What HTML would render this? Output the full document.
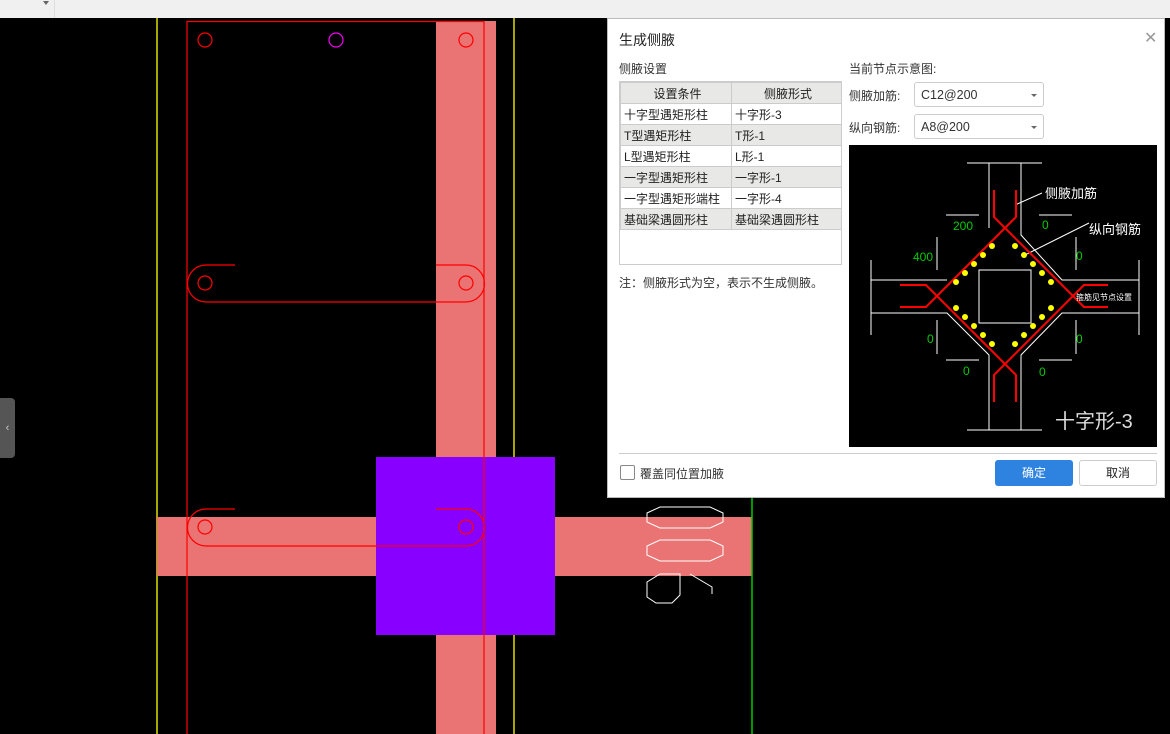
<!DOCTYPE html>
<html><head><meta charset="utf-8"><style>
body{margin:0;width:1170px;height:734px;overflow:hidden;background:#000;position:relative;font-family:"Liberation Sans","Noto Sans CJK SC",sans-serif;}
.a{position:absolute}
.top{left:0;top:0;width:1170px;height:18px;background:#f0f0f0}
.dlg{left:607px;top:18px;width:556px;height:478px;background:#fff;border:1px solid #bbb;font-size:12px;color:#333}
table{border-collapse:collapse;font-size:12px;}
td{border:1px solid #ccc;height:20px;padding:0 0 0 3px;white-space:nowrap;color:#222}
.g td{background:#e8e8e6}
.sel{border:1px solid #ccc;border-radius:3px;width:130px;height:25px;line-height:25px;padding-left:6px;box-sizing:border-box;font-size:12.5px}
.sel:after{content:"";position:absolute;right:6px;top:11px;border:3px solid transparent;border-top:3px solid #666}
</style></head><body>
<div class="a top"><div class="a" style="left:54px;top:0;width:1px;height:18px;background:#ddd"></div><div class="a" style="left:43px;top:1px;border:3px solid transparent;border-top:4px solid #666"></div></div>
<svg class="a" style="left:0;top:0" width="1170" height="734">
<line x1="157" y1="18" x2="157" y2="734" stroke="#dd0" stroke-width="1.5"/>
<line x1="514" y1="18" x2="514" y2="734" stroke="#dd0" stroke-width="1.5"/>
<rect x="436" y="21" width="60" height="713" fill="#ea7373"/>
<rect x="157" y="517" width="595" height="59" fill="#ea7373"/>
<rect x="376" y="457" width="179" height="178" fill="#8800ff"/>
<line x1="752" y1="497" x2="752" y2="734" stroke="#0c0" stroke-width="1.5"/>
<g fill="none" stroke="#f00" stroke-width="1.2">
<path d="M187,734 V21.5 H484 V734"/>
<circle cx="205" cy="40" r="7"/><circle cx="466" cy="40" r="7"/>
<circle cx="205" cy="283" r="7"/><circle cx="466" cy="283" r="7"/>
<circle cx="205" cy="527" r="7"/><circle cx="466" cy="527" r="7"/>
<path d="M235,265 H206 A18,18 0 0 0 206,302 H466 A18,18 0 0 0 466,265 H436"/>
<path d="M235,509 H206 A18,18 0 0 0 206,546 H466 A18,18 0 0 0 466,509 H436"/>
</g>
<circle cx="336" cy="40" r="7" fill="none" stroke="#e0e" stroke-width="1.2"/>
<g fill="none" stroke="#fff" stroke-width="1">
<path d="M660,507 H710 L723,513 V522 L710,528 H660 L647,522 V513 Z"/>
<path d="M660,540 H710 L723,546 V555 L710,561 H660 L647,555 V546 Z"/>
<path d="M660,574 H680 V595 L672,603 H656 L647,597 V582 Z M690,574 L712,587 V594"/>
</g>
</svg>
<div class="a" style="left:0;top:398px;width:15px;height:60px;background:#555;border-radius:0 4px 4px 0;color:#ccc;font-size:11px;line-height:60px;text-align:center">&lsaquo;</div>

<div class="a dlg">
<div class="a" style="left:11px;top:11px;font-size:14px;color:#222">生成侧腋</div>
<div class="a" style="left:536px;top:9px;font-size:16px;color:#999;font-weight:300">✕</div>
<div class="a" style="left:11px;top:41px">侧腋设置</div>
<div class="a" style="left:11px;top:62px;width:223px;height:184px;border:1px solid #ccc;box-sizing:border-box">
<table style="width:222px">
<tr class="g"><td style="text-align:center;width:107px">设置条件</td><td style="text-align:center">侧腋形式</td></tr>
<tr><td>十字型遇矩形柱</td><td>十字形-3</td></tr>
<tr class="g"><td>T型遇矩形柱</td><td>T形-1</td></tr>
<tr><td>L型遇矩形柱</td><td>L形-1</td></tr>
<tr class="g"><td>一字型遇矩形柱</td><td>一字形-1</td></tr>
<tr><td>一字型遇矩形端柱</td><td>一字形-4</td></tr>
<tr class="g"><td>基础梁遇圆形柱</td><td>基础梁遇圆形柱</td></tr>
</table></div>
<div class="a" style="left:11px;top:255px">注：侧腋形式为空，表示不生成侧腋。</div>
<div class="a" style="left:241px;top:41px">当前节点示意图:</div>
<div class="a" style="left:241px;top:68px">侧腋加筋:</div>
<div class="a sel" style="left:306px;top:63px">C12@200</div>
<div class="a" style="left:241px;top:100px">纵向钢筋:</div>
<div class="a sel" style="left:306px;top:95px">A8@200</div>
<svg class="a" style="left:241px;top:126px" width="308" height="302">
<rect width="308" height="302" fill="#000"/>
<g stroke="#fff" stroke-width="1" fill="none">
<path d="M118,18 H193 M140,18 V83 M172,18 V90 L213,135 H290 M22,115 V190 M22,135 H98 M22,168 H98 L140,210 V285 M172,285 V210 L213,168 H290 M290,115 V190 M118,285 H193"/>
<rect x="130" y="125" width="52" height="53"/>
<path d="M97,70 H130 M190,70 H223 M88,92 V125 M227,92 V125 M88,175 V209 M227,175 V209 M97,215 H130 M190,215 H223"/>
<path d="M166,60 L193,48 M176,110 L240,78"/>
</g>
<g stroke="#f00" stroke-width="2" fill="none">
<path d="M145,45 V72 L235,162 H259 M167,45 V72 L77,162 H51 M145,257 V230 L235,140 H259 M167,257 V230 L77,140 H51"/>
</g>
<g fill="#ff0">
<circle cx="143" cy="101" r="3"/><circle cx="134" cy="110" r="3"/><circle cx="125" cy="119" r="3"/><circle cx="116" cy="128" r="3"/><circle cx="107" cy="137" r="3"/>
<circle cx="166" cy="101" r="3"/><circle cx="175" cy="110" r="3"/><circle cx="184" cy="119" r="3"/><circle cx="193" cy="128" r="3"/><circle cx="202" cy="137" r="3"/>
<circle cx="107" cy="163" r="3"/><circle cx="116" cy="172" r="3"/><circle cx="125" cy="181" r="3"/><circle cx="134" cy="190" r="3"/><circle cx="143" cy="199" r="3"/>
<circle cx="202" cy="163" r="3"/><circle cx="193" cy="172" r="3"/><circle cx="184" cy="181" r="3"/><circle cx="175" cy="190" r="3"/><circle cx="166" cy="199" r="3"/>
</g>
<g font-size="13" fill="#fff"><text x="196" y="53">侧腋加筋</text><text x="240" y="89">纵向钢筋</text><text x="227" y="155" font-size="8">箍筋见节点设置</text>
<text x="206" y="283" font-size="20" fill="#ddd">十字形-3</text></g>
<g font-size="12" fill="#0c0"><text x="104" y="85">200</text><text x="193" y="84">0</text><text x="64" y="116">400</text><text x="227" y="115">0</text><text x="78" y="198">0</text><text x="227" y="198">0</text><text x="114" y="230">0</text><text x="190" y="231">0</text></g>
</svg>
<div class="a" style="left:11px;top:434px;width:538px;height:1px;background:#ccc"></div>
<div class="a" style="left:12px;top:446px;width:13px;height:13px;border:1px solid #888;border-radius:2px"></div>
<div class="a" style="left:32px;top:446px">覆盖同位置加腋</div>
<div class="a" style="left:387px;top:441px;width:78px;height:26px;background:#2e83e0;border-radius:3px;color:#fff;text-align:center;line-height:26px">确定</div>
<div class="a" style="left:471px;top:441px;width:76px;height:24px;border:1px solid #ccc;border-radius:3px;text-align:center;line-height:24px;color:#222">取消</div>
</div>
</body></html>
